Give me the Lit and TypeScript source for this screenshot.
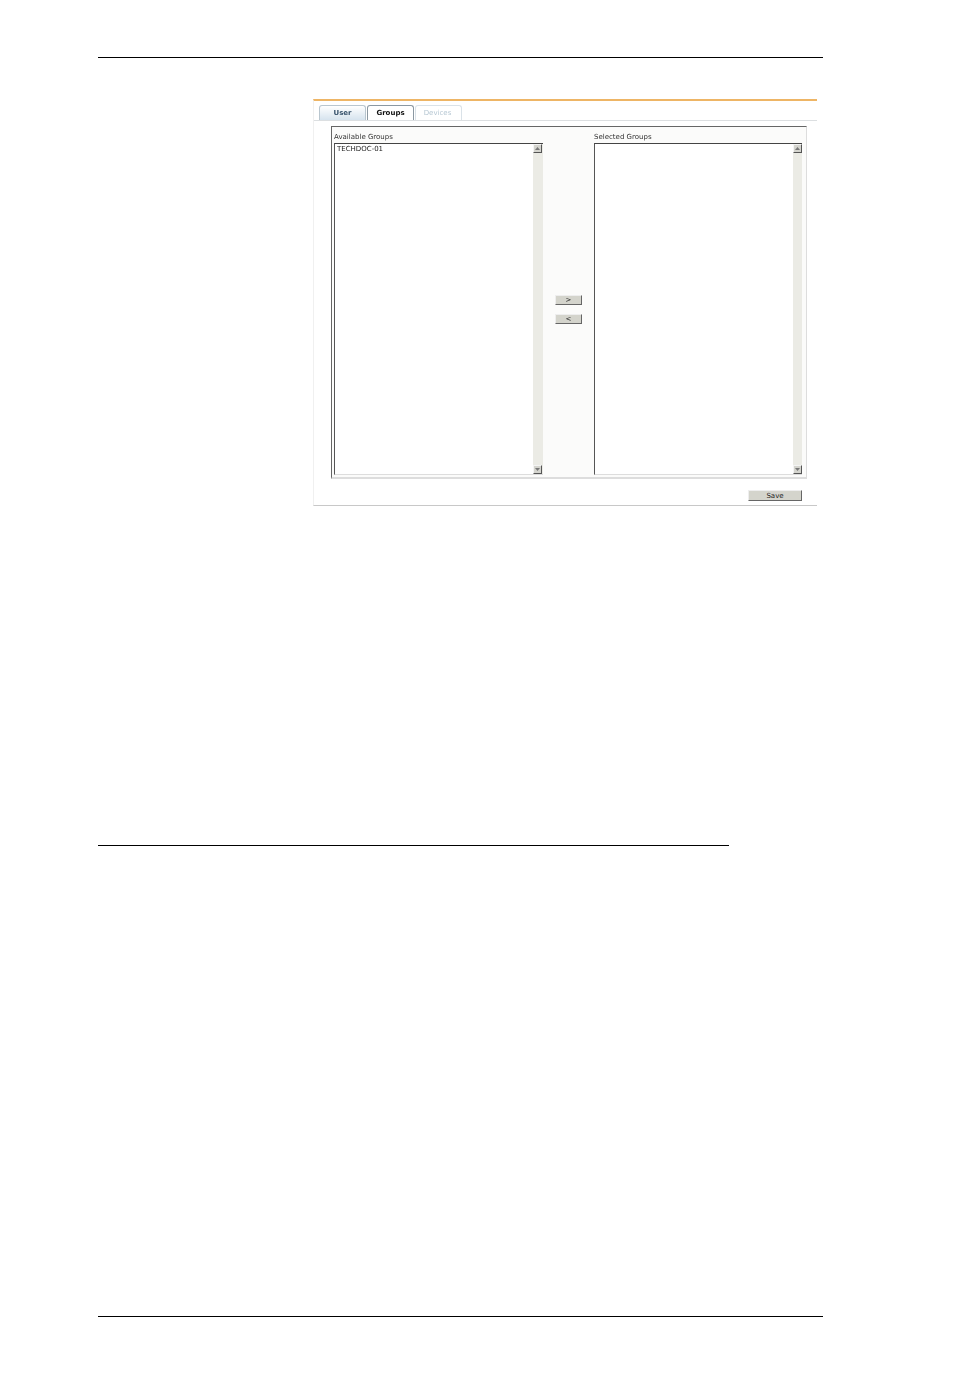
import { LitElement, html, css } from "lit";
import { customElement } from "lit/decorators.js";

@customElement("app-root")
export class AppRoot extends LitElement {
  static styles = css`
    :host { display: block; width: 954px; height: 1384px; background: #fff; overflow: hidden; font-family: "DejaVu Sans", Verdana, sans-serif; }
    .page { display: flex; flex-direction: column; padding: 57px 131px 0 98px; }
    .rule { height: 1px; background: #000; flex: none; }
    .rule.mid { width: 631px; margin-top: 339px; }
    .rule.bottom { margin-top: 470px; }
    .panel { margin: 41px 6px 0 215px; height: 407px; box-sizing: border-box; border-top: 2px solid #eeb565; border-bottom: 1px solid #c8c8c8; border-left: 1px solid #f0f0f0; display: flex; flex-direction: column; filter: blur(0.5px); }
    .tabs { display: flex; height: 15px; margin-top: 4px; padding-left: 5px; gap: 1px; border-bottom: 1px solid #dcdfe1; flex: none; }
    .tab { width: 47px; box-sizing: border-box; border: 1px solid #b9c6cf; border-bottom: none; border-radius: 3px 3px 0 0; font-size: 7px; font-weight: bold; line-height: 15px; text-align: center; color: #3a556e; background: linear-gradient(#fff, #d6e3ee); }
    .tab.active { color: #111; background: #fff; border-color: #8b98a2; }
    .tab.off { color: #b6c7d3; background: #fff; border-color: #dae2e8; font-weight: normal; padding-right: 2px; }
    .box { margin: 5px 10px 0 17px; height: 353px; box-sizing: border-box; border-top: 1px solid #666; border-left: 1px solid #666; border-right: 1px solid #ddd; border-bottom: 2px solid #ddd; background: #fbfbfa; padding: 0 4px 0 2px; display: flex; flex: none; }
    .col { display: flex; flex-direction: column; }
    .col.left { width: 209px; }
    .col.right { width: 208px; }
    .label { height: 16px; font-size: 7px; line-height: 20px; color: #333; white-space: nowrap; }
    .list { height: 332px; box-sizing: border-box; display: flex; background: #fff; border-top: 1px solid #444; border-left: 1px solid #555; border-bottom: 1px solid #ddd; }
    .items { flex: 1; font-size: 7px; line-height: 10px; color: #222; padding: 0 2px; }
    .scroll { width: 10px; background: #ebebe5; display: flex; flex-direction: column; justify-content: space-between; box-sizing: border-box; }
    .right .scroll { width: 9px; }
    .arrow { width: 9px; height: 9px; box-sizing: border-box; background: #d4d4ce; border-right: 1px solid #555; border-bottom: 1px solid #555; border-top: 1px solid #f4f4f4; border-left: 1px solid #f4f4f4; display: flex; align-items: center; justify-content: center; }
    .arrow svg { display: block; }
    .mid-col { width: 51px; display: flex; flex-direction: column; align-items: center; gap: 9px; padding-top: 168px; box-sizing: border-box; }
    .btn { box-sizing: border-box; background: #d4d4cc; border-top: 1px solid #eee; border-left: 1px solid #eee; border-right: 1px solid #666; border-bottom: 1px solid #666; font-size: 7px; color: #222; text-align: center; display: flex; align-items: center; justify-content: center; }
    .mid-col .btn { width: 27px; height: 10px; }
    .foot { display: flex; justify-content: flex-end; padding: 11px 15px 0 0; }
    .foot .btn { width: 54px; height: 11px; }
  `;

  private scrollbar() {
    const up = html`<div class="arrow"><svg width="5" height="3" viewBox="0 0 5 3"><path d="M2.5 0 L5 3 H0 Z" fill="#777"/></svg></div>`;
    const down = html`<div class="arrow"><svg width="5" height="3" viewBox="0 0 5 3"><path d="M0 0 H5 L2.5 3 Z" fill="#777"/></svg></div>`;
    return html`<div class="scroll">${up}${down}</div>`;
  }

  render() {
    return html`
      <div class="page">
        <div class="rule"></div>
        <div class="panel">
          <div class="tabs">
            <div class="tab">User</div>
            <div class="tab active">Groups</div>
            <div class="tab off">Devices</div>
          </div>
          <div class="box">
            <div class="col left">
              <div class="label">Available Groups</div>
              <div class="list"><div class="items">TECHDOC-01</div>${this.scrollbar()}</div>
            </div>
            <div class="mid-col">
              <div class="btn">&gt;</div>
              <div class="btn">&lt;</div>
            </div>
            <div class="col right">
              <div class="label">Selected Groups</div>
              <div class="list"><div class="items"></div>${this.scrollbar()}</div>
            </div>
          </div>
          <div class="foot"><div class="btn">Save</div></div>
        </div>
        <div class="rule mid"></div>
        <div class="rule bottom"></div>
      </div>
    `;
  }
}
